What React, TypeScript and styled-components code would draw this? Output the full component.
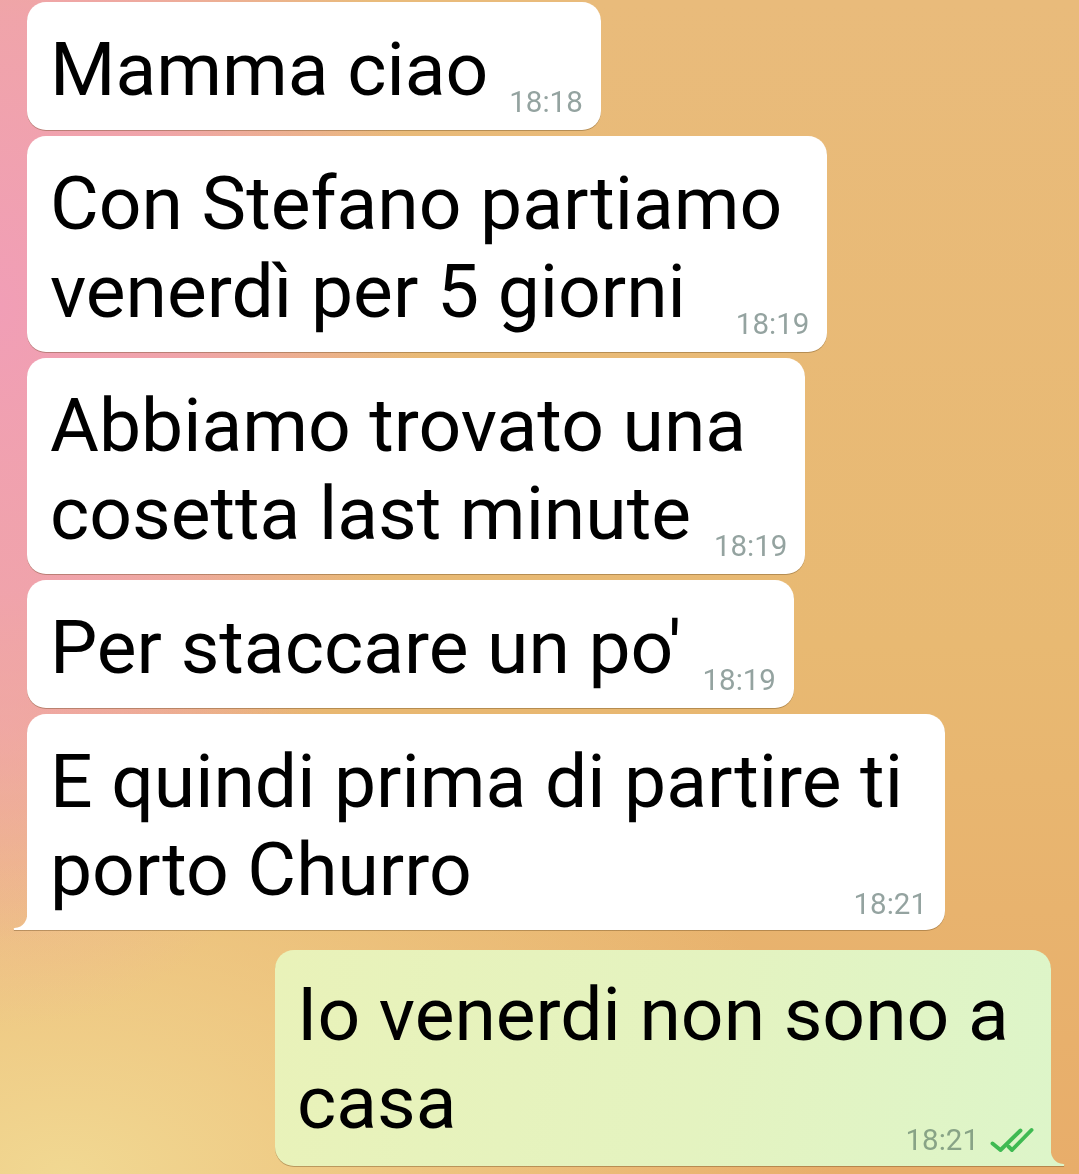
import React from "react";
import styled, { createGlobalStyle, css } from "styled-components";

const GlobalStyle = createGlobalStyle`
  html, body {
    margin: 0;
    padding: 0;
  }
  body {
    font-family: Roboto, "Noto Sans", "Liberation Sans", sans-serif;
    background-color: #e9b872;
  }
`;

const Screen = styled.div`
  box-sizing: border-box;
  width: 1079px;
  height: 1174px;
  overflow: hidden;
  padding: 2px 28px 0 27px;
  display: flex;
  flex-direction: column;
  align-items: flex-start;
  gap: 6px;
  background-color: #e9b872;
  background-image:
    radial-gradient(ellipse 420px 640px at 0% 26%, rgba(241, 158, 182, 1) 0%, rgba(241, 160, 178, 0.85) 45%, rgba(241, 165, 170, 0) 100%),
    radial-gradient(ellipse 300px 300px at 0% 62%, rgba(240, 172, 160, 0.7) 0%, rgba(240, 172, 160, 0) 100%),
    radial-gradient(ellipse 780px 480px at 6% 100%, rgba(241, 216, 146, 1) 0%, rgba(241, 210, 140, 0.65) 45%, rgba(241, 210, 140, 0) 100%),
    linear-gradient(180deg, #e9bb7b 0%, #e8b972 55%, #e8ad6a 100%);
`;

type Side = "in" | "out";

const Bubble = styled.div<{ $side: Side; $full?: boolean; $tail?: boolean }>`
  position: relative;
  box-sizing: border-box;
  display: flex;
  flex-direction: column;
  width: ${(p) => (p.$full ? (p.$side === "out" ? "776px" : "918px") : "fit-content")};
  padding: ${(p) => (p.$side === "out" ? "20px 16px 0 22px" : "23px 18px 0 23px")};
  border-radius: 19px;
  color: #000;
  filter: drop-shadow(0 1px 0.6px rgba(90, 60, 20, 0.35));
  ${(p) =>
    p.$side === "out"
      ? css`
          align-self: flex-end;
          margin-top: 14px;
          background: linear-gradient(100deg, #e9f2b9 0%, #e4f3c0 55%, #ddf5c9 100%);
        `
      : css`
          background: #ffffff;
        `}
  ${(p) =>
    p.$tail &&
    (p.$side === "out"
      ? css`
          border-bottom-right-radius: 0;
          &::after {
            content: "";
            position: absolute;
            right: -14px;
            bottom: 0;
            width: 15px;
            height: 22px;
            background: #ddf5c9;
            transform: scaleX(-1);
            clip-path: path("M15 0 Q15 19 1.5 20 Q0 20.6 1 22 L15 22 Z");
          }
        `
      : css`
          border-bottom-left-radius: 0;
          &::after {
            content: "";
            position: absolute;
            left: -14px;
            bottom: 0;
            width: 15px;
            height: 22px;
            background: #ffffff;
            clip-path: path("M15 0 Q15 19 1.5 20 Q0 20.6 1 22 L15 22 Z");
          }
        `)}
`;

const Line = styled.div`
  font-size: 75px;
  line-height: 88px;
  white-space: nowrap;
`;

const LastRow = styled.div<{ $gap: number }>`
  display: flex;
  align-items: flex-end;
  justify-content: space-between;
  gap: ${(p) => p.$gap}px;
`;

const LastText = styled(Line)<{ $pb: number }>`
  margin-bottom: ${(p) => p.$pb}px;
`;

const Meta = styled.div<{ $side: Side; $pb: number }>`
  display: flex;
  align-items: center;
  gap: 10px;
  font-size: 29.5px;
  line-height: 34px;
  white-space: nowrap;
  margin-bottom: ${(p) => p.$pb}px;
  color: ${(p) => (p.$side === "out" ? "#88a386" : "#94a3a0")};
`;

const Checks = () => (
  <svg width="46" height="28" viewBox="0 0 46 28" fill="none" aria-hidden="true">
    <path
      d="M3.5 17.5 L11.5 24 L31.5 4.5"
      stroke="#3fba52"
      strokeWidth="3.9"
      strokeLinecap="round"
      strokeLinejoin="round"
    />
    <path
      d="M19.5 20.5 L23 24 L42.5 4"
      stroke="#3fba52"
      strokeWidth="3.9"
      strokeLinecap="round"
      strokeLinejoin="round"
    />
  </svg>
);

type Message = {
  side: Side;
  lines: string[];
  time: string;
  gap?: number;
  full?: boolean;
  tail?: boolean;
  read?: boolean;
};

const messages: Message[] = [
  { side: "in", lines: ["Mamma ciao"], time: "18:18", gap: 21 },
  { side: "in", lines: ["Con Stefano partiamo", "venerdì per 5 giorni"], time: "18:19", gap: 50 },
  { side: "in", lines: ["Abbiamo trovato una", "cosetta last minute"], time: "18:19", gap: 23 },
  { side: "in", lines: ["Per staccare un po'"], time: "18:19", gap: 21 },
  {
    side: "in",
    lines: ["E quindi prima di partire ti", "porto Churro"],
    time: "18:21",
    full: true,
    tail: true,
  },
  {
    side: "out",
    lines: ["Io venerdi non sono a", "casa"],
    time: "18:21",
    full: true,
    tail: true,
    read: true,
  },
];

const ChatBubble = ({ m }: { m: Message }) => {
  const head = m.lines.slice(0, -1);
  const last = m.lines[m.lines.length - 1];
  const textPb = m.side === "out" ? 20 : 17;
  const metaPb = m.full ? 9 : 11;
  return (
    <Bubble $side={m.side} $full={m.full} $tail={m.tail}>
      {head.map((l, i) => (
        <Line key={i}>{l}</Line>
      ))}
      <LastRow $gap={m.gap ?? 16}>
        <LastText $pb={textPb}>{last}</LastText>
        <Meta $side={m.side} $pb={metaPb}>
          <span>{m.time}</span>
          {m.read && <Checks />}
        </Meta>
      </LastRow>
    </Bubble>
  );
};

export default function App() {
  return (
    <>
      <GlobalStyle />
      <Screen>
        {messages.map((m, i) => (
          <ChatBubble key={i} m={m} />
        ))}
      </Screen>
    </>
  );
}
